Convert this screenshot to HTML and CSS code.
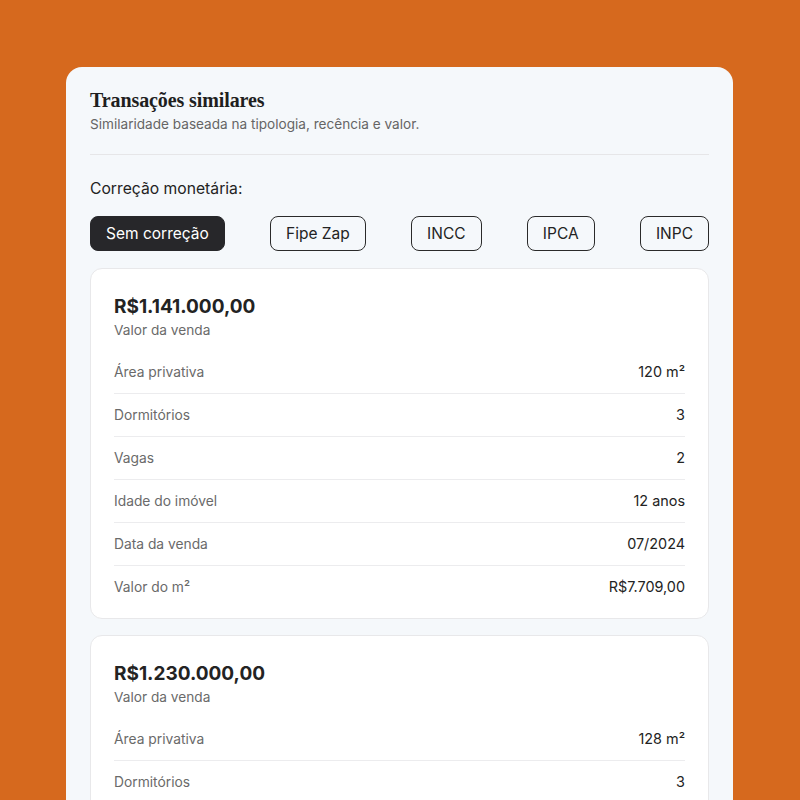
FILE: index.html
```html
<!DOCTYPE html>
<html lang="pt-BR">
<head>
  <meta charset="UTF-8">
  <meta name="viewport" content="width=device-width, initial-scale=1.0">
  <title>Transações similares</title>
  <link rel="stylesheet" href="styles.css">
</head>
<body>
  <div class="panel">
    <h1>Transações similares</h1>
    <p class="subtitle">Similaridade baseada na tipologia, recência e valor.</p>

    <hr class="divider">

    <p class="label">Correção monetária:</p>
    <div class="options">
      <button class="option active">Sem correção</button>
      <button class="option">Fipe Zap</button>
      <button class="option">INCC</button>
      <button class="option">IPCA</button>
      <button class="option">INPC</button>
    </div>

    <div class="cards">
      <div class="card">
        <div class="price">R$1.141.000,00</div>
        <div class="price-label">Valor da venda</div>
        <div class="row"><span>Área privativa</span><span class="value">120 m²</span></div>
        <div class="row"><span>Dormitórios</span><span class="value">3</span></div>
        <div class="row"><span>Vagas</span><span class="value">2</span></div>
        <div class="row"><span>Idade do imóvel</span><span class="value">12 anos</span></div>
        <div class="row"><span>Data da venda</span><span class="value">07/2024</span></div>
        <div class="row"><span>Valor do m²</span><span class="value">R$7.709,00</span></div>
      </div>

      <div class="card">
        <div class="price">R$1.230.000,00</div>
        <div class="price-label">Valor da venda</div>
        <div class="row"><span>Área privativa</span><span class="value">128 m²</span></div>
        <div class="row"><span>Dormitórios</span><span class="value">3</span></div>
      </div>
    </div>
  </div>
</body>
</html>
```

FILE: styles.css
```css
body {
  margin: 0;
  background-color: #d6691e;
  font-family: Inter, 'Noto Sans', sans-serif;
  color: #232323;
  height: 800px;
  overflow: hidden;
}
.panel {
  margin: 67px 67px 0 66px;
  padding: 23px 24px 40px;
  background-color: #f5f8fb;
  border-radius: 16px 16px 0 0;
  min-height: 800px;
}
h1 {
  margin: 0;
  font-family: 'Liberation Serif', 'DejaVu Serif', serif;
  font-size: 20px;
  line-height: 21px;
  font-weight: bold;
  letter-spacing: -0.1px;
  color: #1f1f1f;
}
.subtitle {
  margin: 4px 0 0;
  font-size: 13.6px;
  line-height: 18px;
  color: #656565;
}
.divider {
  border: none;
  border-top: 1px solid #e6e6e8;
  margin: 21px 0 23px;
}
.label {
  margin: 0;
  font-size: 15.7px;
  line-height: 22px;
  color: #232323;
}
.options {
  display: flex;
  justify-content: space-between;
  margin-top: 16px;
}
.option {
  height: 35px;
  padding: 0 15px;
  border: 1px solid #2a2a2a;
  border-radius: 8px;
  background: transparent;
  font-family: inherit;
  font-size: 15.5px;
  color: #232323;
}
.option.active {
  background-color: #27272a;
  border-color: #27272a;
  color: #fff;
}
.cards {
  display: flex;
  flex-direction: column;
  gap: 16px;
  margin-top: 17px;
}
.card {
  background: #fff;
  border: 1px solid #e8e8ea;
  border-radius: 12px;
  padding: 26px 23px 10px;
}
.price {
  font-size: 19px;
  line-height: 24px;
  font-weight: 700;
  color: #232323;
}
.price-label {
  margin-top: 2px;
  font-size: 13.7px;
  line-height: 18px;
  color: #6a6a6a;
  margin-bottom: 12px;
}
.row {
  display: flex;
  justify-content: space-between;
  padding: 11px 0;
  font-size: 13.8px;
  line-height: 20px;
  color: #6a6a6a;
  border-bottom: 1px solid #ececee;
}
.row:last-child {
  border-bottom: none;
}
.value {
  color: #232323;
  font-size: 14.4px;
  font-weight: 400;
}
```
